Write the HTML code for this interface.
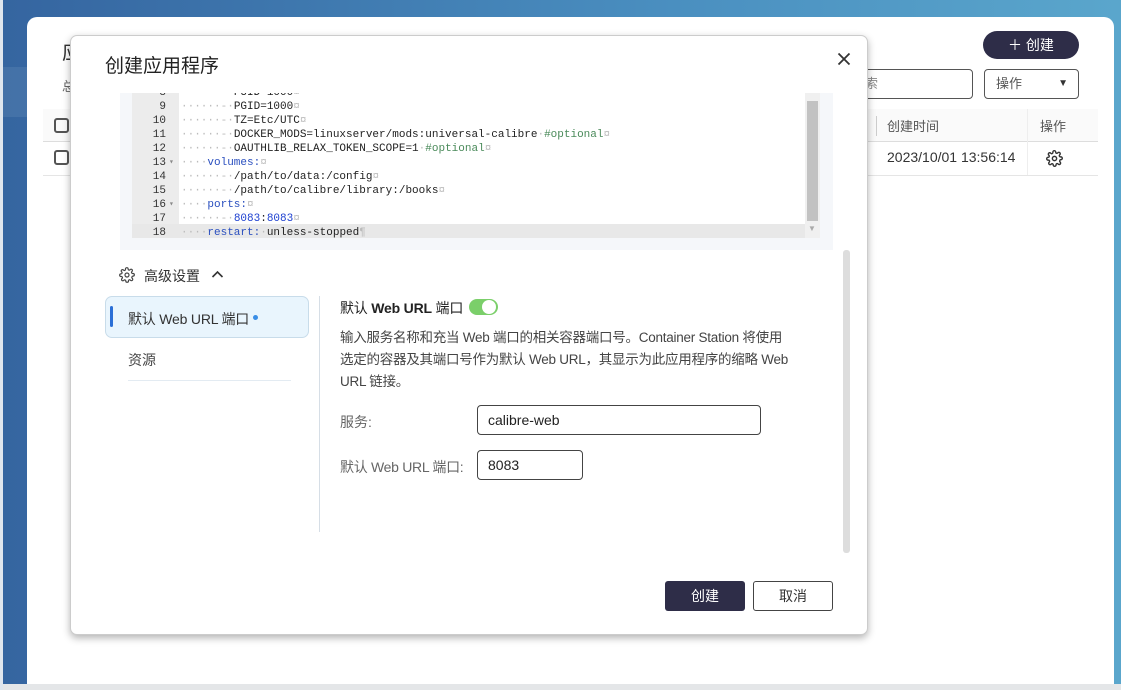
<!DOCTYPE html>
<html><head><meta charset="utf-8"><style>
*{box-sizing:border-box;margin:0;padding:0}
body{width:1121px;height:690px;position:relative;overflow:hidden;background:#e4e6e8;font-family:"Liberation Sans","Noto Sans CJK SC",sans-serif;color:#333}
.abs{position:absolute}
.bluebg{left:3px;top:0;width:1118px;height:684px;background:linear-gradient(90deg,#3565a0,#4a8fc0 60%,#5aa6cc)}
.panel{left:27px;top:17px;width:1087px;height:667px;background:#fff;border-radius:10px 10px 0 0}
.code{font-family:"Liberation Mono",monospace;font-size:11px;line-height:14px;white-space:pre}
.g{color:#bbb}.k{color:#2a4fbf}.c{color:#4a8a5a}.n{color:#1c3fd0}
</style></head><body>
<div class="abs" style="left:0;top:0;width:3px;height:690px;background:#dfe6ee"></div>
<div class="abs bluebg"></div>
<div class="abs" style="left:3px;top:67px;width:24px;height:50px;background:rgba(255,255,255,0.08)"></div>
<div class="abs panel"></div>
<div class="abs" style="left:62px;top:36px;font-size:20px">应</div>
<div class="abs" style="left:62px;top:76px;font-size:13px;color:#666">总</div>
<div class="abs" style="left:983px;top:31px;width:96px;height:28px;border-radius:14px;background:#2e2d48;color:#fff;font-size:14px;line-height:28px;text-align:center">＋ 创建</div>
<div class="abs" style="left:850px;top:69px;width:123px;height:30px;border:1px solid #555;border-radius:4px;font-size:13px;line-height:28px;color:#888;padding-left:14px">索</div>
<div class="abs" style="left:984px;top:69px;width:95px;height:30px;border:1px solid #555;border-radius:4px;font-size:13px;line-height:28px;color:#555;padding-left:11px">操作<span style="position:absolute;right:10px;top:0;font-size:10px;color:#333">▼</span></div>
<div class="abs" style="left:43px;top:109px;width:1055px;height:33px;background:#fafafa;border-bottom:1px solid #ddd"></div>
<div class="abs" style="left:54px;top:118px;width:15px;height:15px;border:2px solid #555;border-radius:3px"></div>
<div class="abs" style="left:54px;top:150px;width:15px;height:15px;border:2px solid #555;border-radius:3px"></div>
<div class="abs" style="left:43px;top:175px;width:1055px;height:1px;background:#e5e5e5"></div>
<div class="abs" style="left:876px;top:116px;width:1px;height:20px;background:#ccc"></div>
<div class="abs" style="left:887px;top:116px;font-size:13px;color:#555">创建时间</div>
<div class="abs" style="left:1027px;top:109px;width:1px;height:66px;background:#eee"></div>
<div class="abs" style="left:1040px;top:116px;font-size:13px;color:#555">操作</div>
<div class="abs" style="left:887px;top:149px;font-size:14px;color:#333">2023/10/01 13:56:14</div>
<svg class="abs" style="left:1046px;top:150px" width="17" height="17" viewBox="0 0 24 24" fill="none" stroke="#333" stroke-width="2"><circle cx="12" cy="12" r="3"/><path d="M19.4 15a1.6 1.6 0 0 0 .3 1.8l.1.1a2 2 0 1 1-2.8 2.8l-.1-.1a1.6 1.6 0 0 0-2.7 1.1V21a2 2 0 1 1-4 0v-.1a1.6 1.6 0 0 0-2.7-1.1l-.1.1a2 2 0 1 1-2.8-2.8l.1-.1a1.6 1.6 0 0 0-1.1-2.7H3a2 2 0 1 1 0-4h.1a1.6 1.6 0 0 0 1.1-2.7l-.1-.1a2 2 0 1 1 2.8-2.8l.1.1a1.6 1.6 0 0 0 2.7-1.1V3a2 2 0 1 1 4 0v.1a1.6 1.6 0 0 0 2.7 1.1l.1-.1a2 2 0 1 1 2.8 2.8l-.1.1a1.6 1.6 0 0 0 1.1 2.7H21a2 2 0 1 1 0 4h-.1a1.6 1.6 0 0 0-1.5 1.3z"/></svg>

<div class="abs" style="left:70px;top:35px;width:798px;height:600px;background:#fff;border-radius:7px;border:1px solid #ccc;box-shadow:0 3px 8px rgba(0,0,0,0.3)"></div>
<div class="abs" style="left:105px;top:51px;font-size:19px;color:#222">创建应用程序</div>
<svg class="abs" style="left:837px;top:52px" width="14" height="14" viewBox="0 0 14 14"><path d="M1.5 1.5 12.5 12.5M12.5 1.5 1.5 12.5" stroke="#333" stroke-width="1.8"/></svg>
<div class="abs" style="left:120px;top:93px;width:713px;height:157px;background:#f5f7fa"></div>
<div class="abs" style="left:132px;top:93px;width:47px;height:145px;background:#ececec"></div>
<div class="abs" style="left:179px;top:93px;width:626px;height:145px;background:#fff"></div>
<div class="abs" style="left:132px;top:224px;width:673px;height:14px;background:#e8e8e8"></div>
<div class="abs" style="left:805px;top:93px;width:15px;height:145px;background:#f0f0f0"></div>
<div class="abs" style="left:807px;top:101px;width:11px;height:120px;background:#c2c2c2"></div>
<div class="abs" style="left:808px;top:224px;font-size:8px;color:#aaa">▼</div>
<div class="abs" style="left:132px;top:93px;width:673px;height:145px;overflow:hidden">
<div class="code abs" style="left:0;top:-7px;width:34px;text-align:right;color:#333">8
9
10
11
12
13
14
15
16
17
18</div>
<div class="code abs" style="left:37px;top:-7px;color:#888;font-size:8px;line-height:14px">




▾


▾</div>
<div class="code abs" style="left:49px;top:-7px;color:#222"><span class="g">········</span>PUID=1000<span class="g">¤</span>
<span class="g">······-·</span>PGID=1000<span class="g">¤</span>
<span class="g">······-·</span>TZ=Etc/UTC<span class="g">¤</span>
<span class="g">······-·</span>DOCKER_MODS=linuxserver/mods:universal-calibre<span class="g">·</span><span class="c">#optional</span><span class="g">¤</span>
<span class="g">······-·</span>OAUTHLIB_RELAX_TOKEN_SCOPE=1<span class="g">·</span><span class="c">#optional</span><span class="g">¤</span>
<span class="g">····</span><span class="k">volumes:</span><span class="g">¤</span>
<span class="g">······-·</span>/path/to/data:/config<span class="g">¤</span>
<span class="g">······-·</span>/path/to/calibre/library:/books<span class="g">¤</span>
<span class="g">····</span><span class="k">ports:</span><span class="g">¤</span>
<span class="g">······-·</span><span class="n">8083</span>:<span class="n">8083</span><span class="g">¤</span>
<span class="g">····</span><span class="k">restart:</span><span class="g">·</span>unless-stopped<span class="g">¶</span></div>
</div>
<div class="abs" style="left:843px;top:250px;width:7px;height:303px;background:#ddd;border-radius:3px"></div>

<svg class="abs" style="left:119px;top:267px" width="16" height="16" viewBox="0 0 24 24" fill="none" stroke="#444" stroke-width="1.8"><circle cx="12" cy="12" r="3"/><path d="M19.4 15a1.6 1.6 0 0 0 .3 1.8l.1.1a2 2 0 1 1-2.8 2.8l-.1-.1a1.6 1.6 0 0 0-2.7 1.1V21a2 2 0 1 1-4 0v-.1a1.6 1.6 0 0 0-2.7-1.1l-.1.1a2 2 0 1 1-2.8-2.8l.1-.1a1.6 1.6 0 0 0-1.1-2.7H3a2 2 0 1 1 0-4h.1a1.6 1.6 0 0 0 1.1-2.7l-.1-.1a2 2 0 1 1 2.8-2.8l.1.1a1.6 1.6 0 0 0 2.7-1.1V3a2 2 0 1 1 4 0v.1a1.6 1.6 0 0 0 2.7 1.1l.1-.1a2 2 0 1 1 2.8 2.8l-.1.1a1.6 1.6 0 0 0 1.1 2.7H21a2 2 0 1 1 0 4h-.1a1.6 1.6 0 0 0-1.5 1.3z"/></svg>
<div class="abs" style="left:144px;top:266px;font-size:14px;color:#333">高级设置</div>
<svg class="abs" style="left:211px;top:269px" width="13" height="10" viewBox="0 0 13 10"><path d="M1.5 8 6.5 3 11.5 8" fill="none" stroke="#333" stroke-width="1.6"/></svg>

<div class="abs" style="left:105px;top:296px;width:204px;height:42px;background:#e9f5fd;border:1px solid #c8dcea;border-radius:7px"></div>
<div class="abs" style="left:110px;top:306px;width:3px;height:21px;background:#2b6fd6;border-radius:2px"></div>
<div class="abs" style="left:128px;top:309px;font-size:14px;color:#333;letter-spacing:-0.2px">默认 Web URL 端口</div>
<div class="abs" style="left:253px;top:315px;width:5px;height:5px;border-radius:50%;background:#3a8ee6"></div>
<div class="abs" style="left:128px;top:350px;font-size:14px;color:#444">资源</div>
<div class="abs" style="left:128px;top:380px;width:163px;height:1px;background:#e3ebf2"></div>
<div class="abs" style="left:319px;top:296px;width:1px;height:236px;background:#d6dee6"></div>

<div class="abs" style="left:340px;top:298px;font-size:14px;color:#222;letter-spacing:-0.2px">默认 <b style="font-weight:600">Web URL</b> 端口</div>
<div class="abs" style="left:469px;top:299px;width:29px;height:16px;border-radius:8px;background:#7bcf6a"></div>
<div class="abs" style="left:482px;top:300px;width:14px;height:14px;border-radius:50%;background:#fff"></div>
<div class="abs" style="left:340px;top:327px;white-space:nowrap;font-size:13.5px;line-height:22px;color:#444;letter-spacing:-0.25px">输入服务名称和充当 Web 端口的相关容器端口号。Container Station 将使用<br>选定的容器及其端口号作为默认 Web URL，其显示为此应用程序的缩略 Web<br>URL 链接。</div>
<div class="abs" style="left:340px;top:412px;font-size:14px;color:#666">服务:</div>
<div class="abs" style="left:477px;top:405px;width:284px;height:30px;border:1px solid #444;border-radius:4px;font-size:14px;line-height:28px;padding-left:10px;color:#222">calibre-web</div>
<div class="abs" style="left:340px;top:457px;font-size:14px;color:#666;letter-spacing:-0.3px">默认 Web URL 端口:</div>
<div class="abs" style="left:477px;top:450px;width:106px;height:30px;border:1px solid #444;border-radius:4px;font-size:14px;line-height:28px;padding-left:10px;color:#222">8083</div>

<div class="abs" style="left:665px;top:581px;width:80px;height:30px;background:#2e2d48;border-radius:3px;color:#fff;font-size:14px;line-height:30px;text-align:center">创建</div>
<div class="abs" style="left:753px;top:581px;width:80px;height:30px;border:1px solid #444;border-radius:3px;color:#333;font-size:14px;line-height:28px;text-align:center">取消</div>
</body></html>
